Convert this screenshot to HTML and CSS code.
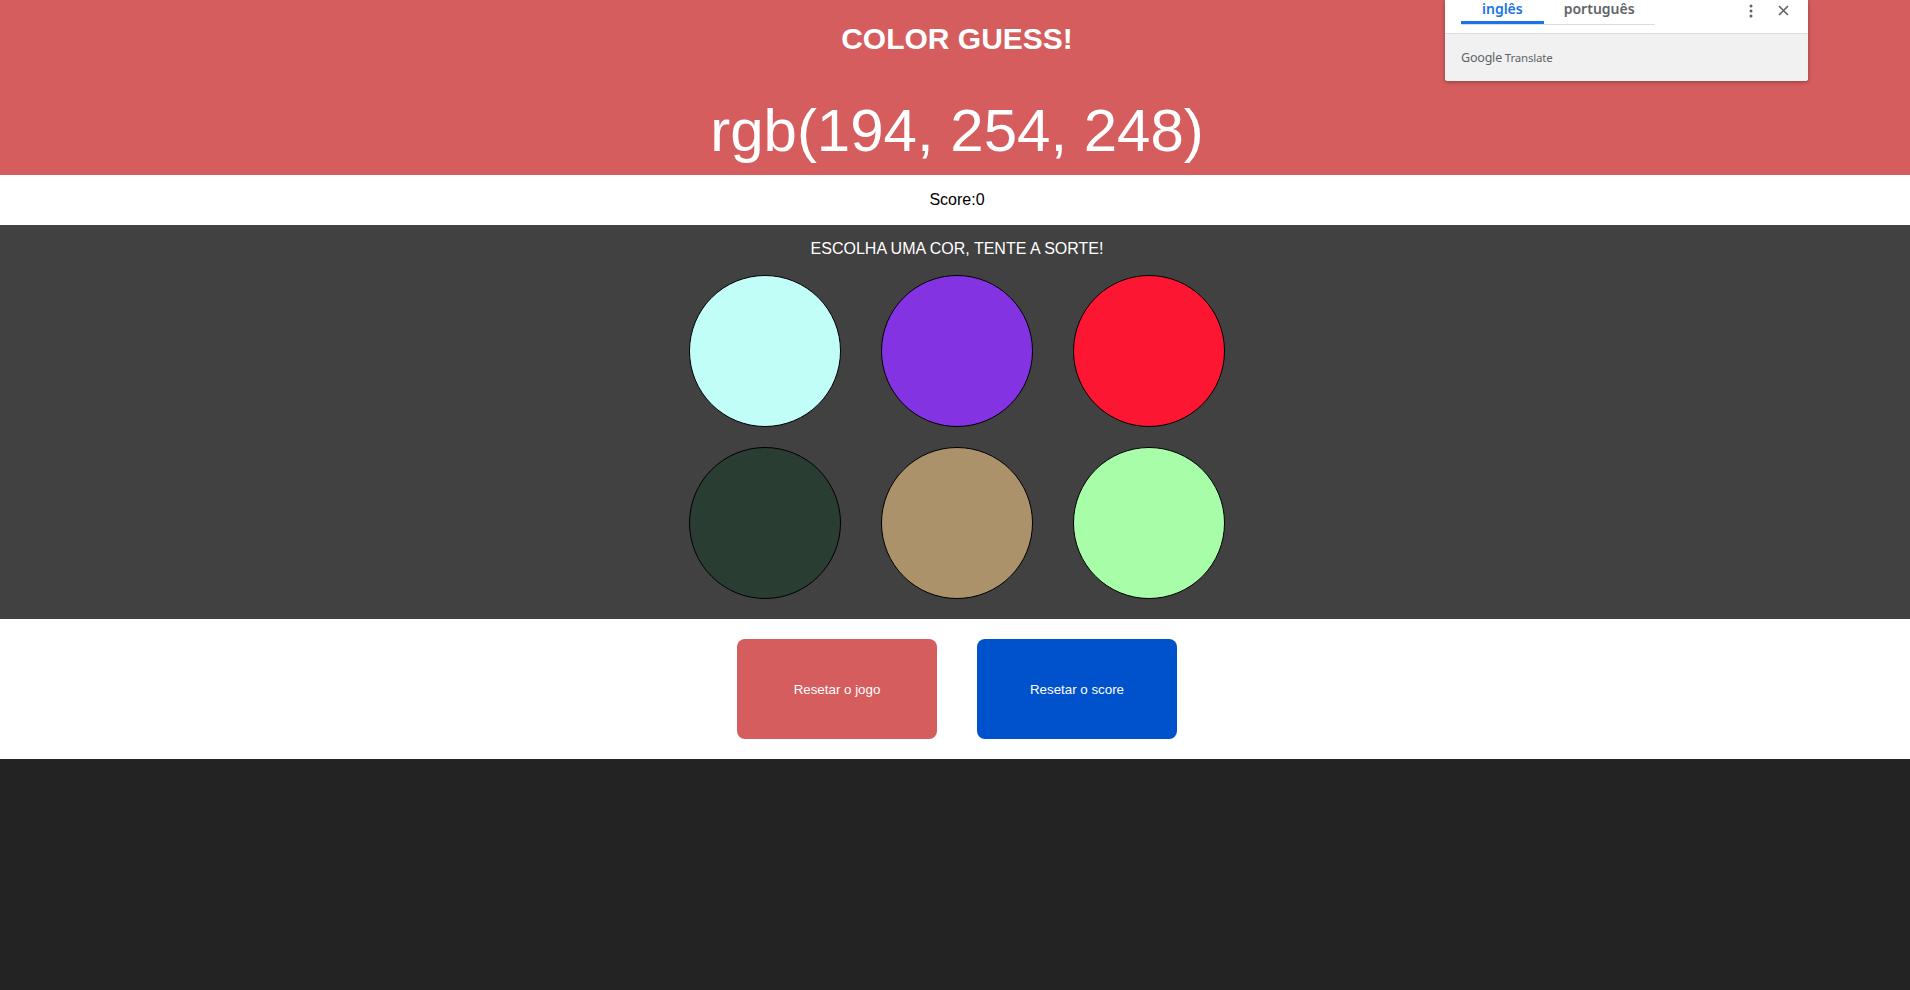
FILE: index.html
```html
<!DOCTYPE html>
<html lang="pt">
<head>
<meta charset="utf-8">
<title>Color Guess</title>
<link rel="stylesheet" href="styles.css">
</head>
<body>
<header class="header">
  <h1 class="title">COLOR GUESS!</h1>
  <p class="rgb">rgb(194, 254, 248)</p>
</header>
<div class="score">Score:0</div>
<main class="board">
  <p class="hint">ESCOLHA UMA COR, TENTE A SORTE!</p>
  <div class="balls">
    <div class="ball" style="background: rgb(194, 254, 248)"></div>
    <div class="ball" style="background: rgb(132, 51, 227)"></div>
    <div class="ball" style="background: rgb(252, 22, 50)"></div>
    <div class="ball" style="background: rgb(41, 61, 51)"></div>
    <div class="ball" style="background: rgb(171, 146, 107)"></div>
    <div class="ball" style="background: rgb(168, 253, 168)"></div>
  </div>
</main>
<section class="actions">
  <button class="btn btn-red">Resetar o jogo</button>
  <button class="btn btn-blue">Resetar o score</button>
</section>
<footer class="rest"></footer>

<div class="translate">
  <div class="tr-top">
    <div class="tabs">
      <span class="tab active">inglês</span>
      <span class="tab">português</span>
    </div>
    <div class="tr-icons">
      <svg class="dots" width="4" height="14" viewBox="0 0 4 14"><circle cx="2" cy="2" r="1.5" fill="#5f6368"/><circle cx="2" cy="7" r="1.5" fill="#5f6368"/><circle cx="2" cy="12" r="1.5" fill="#5f6368"/></svg>
      <svg class="close" width="11" height="11" viewBox="0 0 11 11"><path d="M1 1L10 10M10 1L1 10" stroke="#5f6368" stroke-width="1.6"/></svg>
    </div>
  </div>
  <div class="tr-bottom"><span class="g">Google</span> Translate</div>
</div>
</body>
</html>
```
FILE: styles.css
```css
html, body {
  margin: 0;
  padding: 0;
}
body {
  font-family: "Liberation Sans", Arial, sans-serif;
  background: #232323;
  min-height: 990px;
}
.header,
.score,
.board,
.actions {
  padding-left: 4px;
  box-sizing: border-box;
}
.header {
  background: #d65d5e;
  color: #fff;
  text-align: center;
  height: 175px;
  padding-top: 21px;
}
.title {
  margin: 0;
  font-size: 30px;
  line-height: 36px;
  font-weight: bold;
}
.rgb {
  margin: 39px 0 0;
  font-size: 60px;
  line-height: 70px;
}
.score {
  background: #fff;
  color: #000;
  height: 50px;
  line-height: 50px;
  text-align: center;
  font-size: 16px;
}
.board {
  background: #414141;
  padding-top: 15px;
  padding-bottom: 20px;
  display: flex;
  flex-direction: column;
  align-items: center;
}
.hint {
  margin: 0 0 17px;
  color: #fff;
  font-size: 16px;
  line-height: 18px;
}
.balls {
  display: grid;
  grid-template-columns: repeat(3, 152px);
  column-gap: 40px;
  row-gap: 20px;
}
.ball {
  width: 150px;
  height: 150px;
  border: 1px solid #000;
  border-radius: 50%;
}
.actions {
  background: #fff;
  padding-top: 20px;
  padding-bottom: 20px;
  display: flex;
  justify-content: center;
  gap: 40px;
}
.btn {
  width: 200px;
  height: 100px;
  border: none;
  border-radius: 8px;
  color: #fff;
  font-family: "Liberation Sans", Arial, sans-serif;
  font-size: 13.333px;
  padding: 0;
}
.btn-red { background: #d65d5e; }
.btn-blue { background: #0052cc; }

.translate {
  position: absolute;
  top: 0;
  left: 1445px;
  width: 363px;
  height: 81px;
  background: #fff;
  border-radius: 0 0 3px 3px;
  box-shadow: 0 1px 4px rgba(0,0,0,0.35);
  font-family: "Noto Sans", "Open Sans", sans-serif;
  overflow: hidden;
}
.tr-top {
  height: 33px;
  border-bottom: 1px solid #dadce0;
  display: flex;
  justify-content: space-between;
  padding: 0 16px;
}
.tabs {
  display: flex;
  border-bottom: 1px solid #dadce0;
  height: 25px;
  box-sizing: border-box;
  align-self: flex-start;
}
.tab {
  font-size: 14px;
  font-weight: 600;
  color: #5f6368;
  line-height: 18px;
  padding: 0 20px;
  height: 24px;
  box-sizing: border-box;
}
.tab.active {
  color: #1a73e8;
  border-bottom: 3px solid #1a73e8;
  padding: 0 21px;
}
.tr-icons {
  display: flex;
  align-items: flex-start;
  gap: 25px;
  padding-top: 4px;
  padding-right: 3px;
}
.close { margin-top: 1px; }
.tr-bottom {
  background: #f1f1f1;
  height: 47px;
  padding-left: 16px;
  font-size: 11.5px;
  color: #5f6368;
  line-height: 47px;
  letter-spacing: -0.2px;
}
.g { font-size: 12.5px; }
```
